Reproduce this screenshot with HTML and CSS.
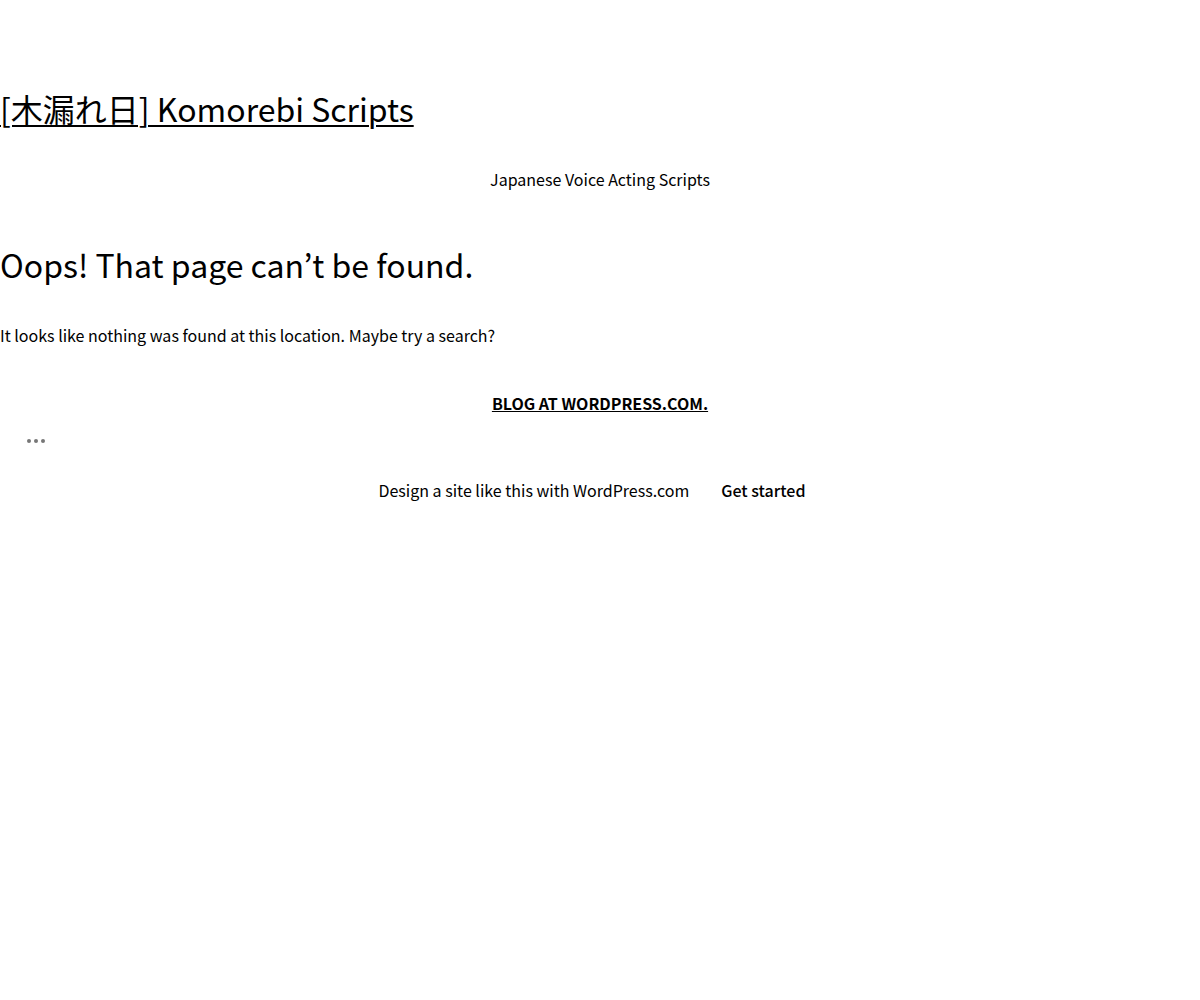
FILE: index.html
```html
<!DOCTYPE html>
<html lang="en">
<head>
<meta charset="utf-8">
<title>Page not found – [木漏れ日] Komorebi Scripts</title>
<link rel="stylesheet" href="styles.css">
</head>
<body>
<header class="site-header">
  <p class="site-title"><a href="#">[木漏れ日] Komorebi Scripts</a></p>
  <p class="site-tagline">Japanese Voice Acting Scripts</p>
</header>
<main class="content">
  <h1 class="page-title">Oops! That page can’t be found.</h1>
  <p class="page-text">It looks like nothing was found at this location. Maybe try a search?</p>
</main>
<footer class="site-footer">
  <p class="credit"><a href="#">BLOG AT WORDPRESS.COM.</a></p>
  <div class="more-dots"><span></span><span></span><span></span></div>
  <div class="banner">
    <span class="banner-text">Design a site like this with WordPress.com</span>
    <a class="banner-cta" href="#">Get started</a>
  </div>
</footer>
</body>
</html>
```
FILE: styles.css
```css
html, body {
  margin: 0;
  padding: 0;
  background: #fff;
  color: #000;
  font-family: "Noto Sans CJK JP", "Noto Sans", sans-serif;
}
a { color: #000; }
p { margin: 0; }
.site-header {
  padding-top: 88px;
}
.site-title {
  font-size: 32px;
  line-height: 40px;
}
.site-title a {
  text-decoration: underline;
  text-underline-offset: 3px;
  text-decoration-thickness: 2px;
}
.site-tagline {
  margin-top: 39px;
  text-align: center;
  font-size: 16px;
  line-height: 24px;
}
.content { padding-top: 53px; }
.page-title {
  margin: 0;
  font-weight: 400;
  font-size: 32px;
  line-height: 40px;
}
.page-text {
  margin-top: 39px;
  font-size: 16px;
  line-height: 24px;
}
.site-footer { padding-top: 44px; }
.credit {
  text-align: center;
  font-size: 16px;
  font-weight: 700;
  line-height: 24px;
}
.credit a { text-decoration: underline; }
.more-dots {
  display: flex;
  gap: 3px;
  padding: 20px 0 0 27px;
  height: 12px;
  align-items: center;
}
.more-dots span {
  width: 4px;
  height: 4px;
  border-radius: 50%;
  background: #777;
}
.banner {
  display: flex;
  justify-content: center;
  gap: 32px;
  padding: 31px 16px 0 0;
  font-size: 16px;
  line-height: 24px;
}
.banner-cta { text-decoration: none; font-weight: 500; }
```
